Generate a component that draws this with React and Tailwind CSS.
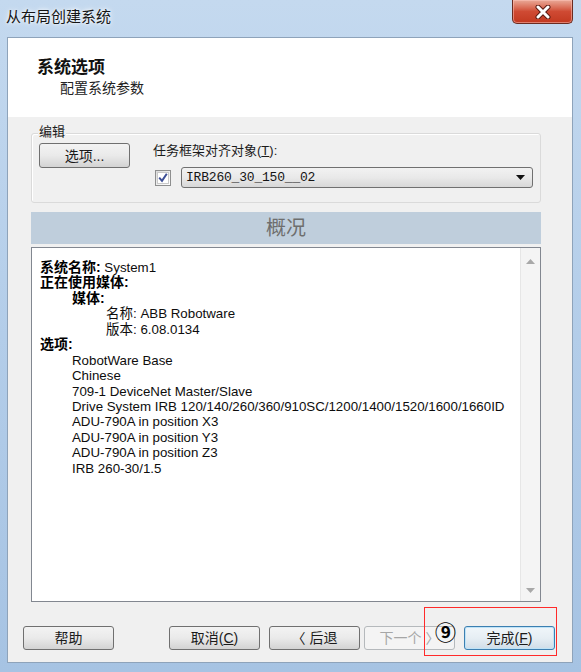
import React from 'react';

const ui = "font-['Liberation_Sans','Noto_Sans_CJK_SC',sans-serif]";

const summary = [
  { indent: 0, bold: '系统名称:', text: ' System1' },
  { indent: 0, bold: '正在使用媒体:' },
  { indent: 1, bold: '媒体:' },
  { indent: 2, label: '名称:', text: ' ABB Robotware' },
  { indent: 2, label: '版本:', text: ' 6.08.0134' },
  { indent: 0, bold: '选项:' },
  { indent: 1, text: 'RobotWare Base' },
  { indent: 1, text: 'Chinese' },
  { indent: 1, text: '709-1 DeviceNet Master/Slave' },
  { indent: 1, text: 'Drive System IRB 120/140/260/360/910SC/1200/1400/1520/1600/1660ID' },
  { indent: 1, text: 'ADU-790A in position X3' },
  { indent: 1, text: 'ADU-790A in position Y3' },
  { indent: 1, text: 'ADU-790A in position Z3' },
  { indent: 1, text: 'IRB 260-30/1.5' },
];

const indentClass = ['pl-0', 'pl-[32px]', 'pl-[66px]'];

const WinButton = ({ children, focused, disabled, className = '' }) => {
  let look = 'border-[#707070] bg-gradient-to-b from-[#f3f3f3] via-[#eaeaea] to-[#d3d3d3] text-[#1b1b1b]';
  if (focused) look = 'border-[#3c7fb1] bg-gradient-to-b from-[#f0f6fa] via-[#e6eef4] to-[#cfdde8] text-[#1b1b1b] shadow-[inset_0_0_0_1px_#bfe3f7]';
  if (disabled) look = 'border-[#b5b9bc] bg-[#f4f4f4] text-[#a6a6a6]';
  return (
    <div className={`shrink-0 w-[91px] h-[24px] rounded-[3px] border flex items-center justify-center text-[14px] leading-none ${look} ${className}`}>
      {children}
    </div>
  );
};

export default function App() {
  return (
    <div className={`relative w-[581px] h-[672px] overflow-hidden bg-gradient-to-b from-[#c4d9ef] via-[#b3cde9] to-[#a6c3e3] ${ui}`}>
      {/* title bar */}
      <div className="h-[37px] flex items-center pl-[6px] pb-[2px]">
        <span className="text-[15px] text-[#151515] [text-shadow:0_0_6px_#ffffff,0_0_3px_#ffffff]">从布局创建系统</span>
      </div>
      <div className="absolute top-0 left-[512px] w-[61px] h-[24px] rounded-b-[5px] border border-t-0 border-[#6b2b20] bg-gradient-to-b from-[#e9a998] via-[#cf4a33] to-[#c2381f] flex items-center justify-center shadow-[inset_0_0_0_1px_rgba(255,200,190,0.5)]">
        <svg width="18" height="14" viewBox="0 0 18 14">
          <path d="M4 2 L14 12 M14 2 L4 12" stroke="#5a1a12" strokeWidth="5" strokeLinecap="round" />
          <path d="M4 2 L14 12 M14 2 L4 12" stroke="#ffffff" strokeWidth="3" strokeLinecap="round" />
        </svg>
      </div>

      {/* client area */}
      <div className="mx-[7px] w-[566px] h-[626px] border border-[#8ea3ba] bg-[#f0f0f0] flex flex-col">
        <div className="h-[79px] bg-white pl-[29px] pt-[18px]">
          <div className="text-[17px] font-bold text-[#111] leading-[23px]">系统选项</div>
          <div className="pl-[23px] text-[14px] text-[#222] leading-[20px] mt-[-1px]">配置系统参数</div>
        </div>

        <div className="flex flex-col pl-[23px] pr-[31px] pt-[8px]">
          <div className="relative z-10 self-start ml-[7px] px-[1px] bg-[#f0f0f0] text-[13px] leading-[14px] text-[#1b1b1b]">编辑</div>
          <div className="-mt-[6px] h-[70px] rounded-[3px] border border-[#dadada] shadow-[inset_1px_1px_0_#ffffff] flex pl-[7px] pt-[9px] pr-[7px]">
            <WinButton className="h-[25px]">选项...</WinButton>
            <div className="ml-[23px] flex-1 flex flex-col">
              <div className="text-[13px] leading-[16px] text-[#1b1b1b]">
                任务框架对齐对象(<span className="underline">T</span>):
              </div>
              <div className="mt-[8px] flex items-center">
                <div className="ml-[2px] w-[16px] h-[16px] border border-[#8e8f8f] bg-gradient-to-br from-[#dcdcdc] to-[#ffffff] flex items-center justify-center">
                  <div className="w-[12px] h-[12px] bg-white border border-[#c9c9c9] flex items-center justify-center">
                    <svg width="11" height="11" viewBox="0 0 10 10">
                      <path d="M1.2 5.2 L4 8.4 L8.8 1.2" fill="none" stroke="#3d4f96" strokeWidth="2" />
                    </svg>
                  </div>
                </div>
                <div className="ml-[10px] flex-1 h-[21px] rounded-[3px] border border-[#707070] bg-gradient-to-b from-[#f2f2f2] via-[#e9e9e9] to-[#d8d8d8] flex items-center pl-[4px] pr-[7px]">
                  <span className="flex-1 font-['Liberation_Mono',monospace] text-[13px] text-[#151515] tracking-[-0.2px]">IRB260_30_150__02</span>
                  <svg width="9" height="5" viewBox="0 0 9 5"><path d="M0 0 H9 L4.5 5 Z" fill="#111" /></svg>
                </div>
              </div>
            </div>
          </div>

          <div className="mt-[9px] h-[32px] bg-[#bfcedc] flex items-center justify-center text-[20px] text-[#6e6e6e]">概况</div>

          <div className="mt-[3px] h-[355px] border border-[#828790] bg-white flex">
            <div className="flex-1 pl-[8px] pt-[12px] text-[13.3px] leading-[15.45px] text-[#0d0d0d]">
              {summary.map((l, i) => (
                <div key={i} className={`${indentClass[l.indent]} h-[15.45px] whitespace-nowrap`}>
                  {l.bold && <span className="font-bold text-[14px] text-black">{l.bold}</span>}
                  {l.label && <span className="text-[13.5px]">{l.label}</span>}
                  {l.text && <span>{l.text}</span>}
                </div>
              ))}
            </div>
            <div className="w-[20px] bg-[#f4f4f4] border-l border-[#e6e6e6] flex flex-col items-center justify-between pt-[11px] pb-[8px]">
              <svg width="9" height="5" viewBox="0 0 9 5"><path d="M0 5 L4.5 0 L9 5 Z" fill="#a8a8a8" /></svg>
              <svg width="9" height="5" viewBox="0 0 9 5"><path d="M0 0 L9 0 L4.5 5 Z" fill="#a8a8a8" /></svg>
            </div>
          </div>

          <div className="-ml-[8px] -mr-[13px] mt-[24px] flex items-center">
            <WinButton>帮助</WinButton>
            <WinButton className="ml-[55px]">取消(<span className="underline">C</span>)</WinButton>
            <WinButton className="ml-[9px]">〈 后退</WinButton>
            <WinButton className="ml-[4px]" disabled>下一个 〉</WinButton>
            <WinButton className="ml-[9px]" focused>完成(<span className="underline">F</span>)</WinButton>
          </div>
        </div>
      </div>

      {/* annotation */}
      <div className="absolute left-[424px] top-[607px] w-[133px] h-[49px] border border-[#ff2a2a]" />
      <div className="absolute left-[435px] top-[621px] text-[21px] font-bold leading-none text-black font-['Noto_Sans_CJK_SC',sans-serif]">⑨</div>
    </div>
  );
}
